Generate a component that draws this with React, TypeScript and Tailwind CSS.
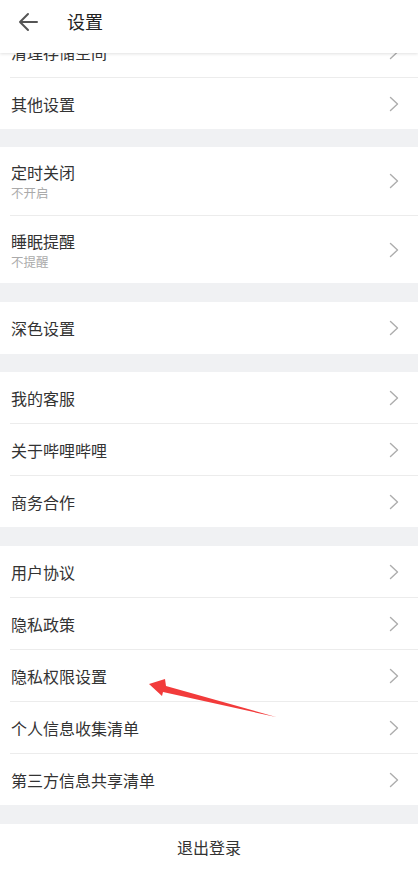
import React from 'react';

type Item = { title: string; sub?: string };

const groups: { items: Item[] }[] = [
  { items: [{ title: '清理存储空间' }, { title: '其他设置' }] },
  { items: [{ title: '定时关闭', sub: '不开启' }, { title: '睡眠提醒', sub: '不提醒' }] },
  { items: [{ title: '深色设置' }] },
  { items: [{ title: '我的客服' }, { title: '关于哔哩哔哩' }, { title: '商务合作' }] },
  {
    items: [
      { title: '用户协议' },
      { title: '隐私政策' },
      { title: '隐私权限设置' },
      { title: '个人信息收集清单' },
      { title: '第三方信息共享清单' },
    ],
  },
];

const font = { fontFamily: '"Noto Sans CJK SC", "Noto Sans", sans-serif' };

const Chevron = () => (
  <svg width="10" height="16" viewBox="0 0 10 16" fill="none" className="shrink-0">
    <path d="M1.5 1.5 L8.5 8 L1.5 14.5" stroke="#adadad" strokeWidth="1.4" strokeLinecap="round" strokeLinejoin="round" />
  </svg>
);

const Row: React.FC<{ item: Item; h: string }> = ({ item, h }) => (
  <div className={`flex items-center justify-between pl-[11px] pr-[19px] ${h}`}>
    <div className="flex flex-col">
      <span className="text-[16px] leading-[22px] text-[#333]">{item.title}</span>
      {item.sub && <span className="text-[12.5px] leading-[17px] text-[#aaa] mt-[1px]">{item.sub}</span>}
    </div>
    <Chevron />
  </div>
);

const Divider = () => <div className="ml-[10px] h-px bg-[#ececec]" />;

export default function App() {
  const heights = [
    ['h-[51px]', 'h-[51px]'],
    ['h-[68px]', 'h-[67px]'],
    ['h-[52px]'],
    ['h-[51px]', 'h-[51px]', 'h-[51px]'],
    ['h-[51px]', 'h-[51px]', 'h-[51px]', 'h-[51px]', 'h-[51px]'],
  ];
  const gaps = ['h-[18px]', 'h-[19px]', 'h-[18px]', 'h-[19px]', 'h-[19px]'];

  return (
    <div className="relative w-[418px] h-[872px] overflow-hidden bg-[#f0f1f3]" style={font}>
      {/* Header overlays the scrolled list */}
      <div className="absolute top-0 left-0 right-0 z-10 h-[53px] pb-[10px] bg-white flex items-center shadow-[0_1px_3px_rgba(0,0,0,0.12)]">
        <svg width="20" height="20" viewBox="0 0 20 20" fill="none" className="ml-[18px]">
          <path d="M2 10 H19 M10 2 L2 10 L10 18" stroke="#555" strokeWidth="2" strokeLinecap="round" strokeLinejoin="round" />
        </svg>
        <span className="ml-[29px] text-[18px] text-[#222]">设置</span>
      </div>

      {/* List (scrolled so the first row sits under the header) */}
      <div className="flex flex-col pt-[26px] bg-white">
        {groups.map((g, gi) => (
          <React.Fragment key={gi}>
            <div className="bg-white">
              {g.items.map((it, i) => (
                <React.Fragment key={it.title}>
                  {i > 0 && <Divider />}
                  <Row item={it} h={heights[gi][i]} />
                </React.Fragment>
              ))}
            </div>
            <div className={`${gaps[gi]} bg-[#f0f1f3]`} />
          </React.Fragment>
        ))}
        <div className="bg-white h-[60px] flex items-start justify-center pt-[12px]">
          <span className="text-[16px] leading-[22px] text-[#333]">退出登录</span>
        </div>
      </div>

      {/* Red annotation arrow */}
      <svg className="absolute left-0 top-0 pointer-events-none" width="418" height="872">
        <polygon points="149,684 165,679 166,686 276,717 163,692 162,696" fill="#f23b3b" />
      </svg>
    </div>
  );
}
